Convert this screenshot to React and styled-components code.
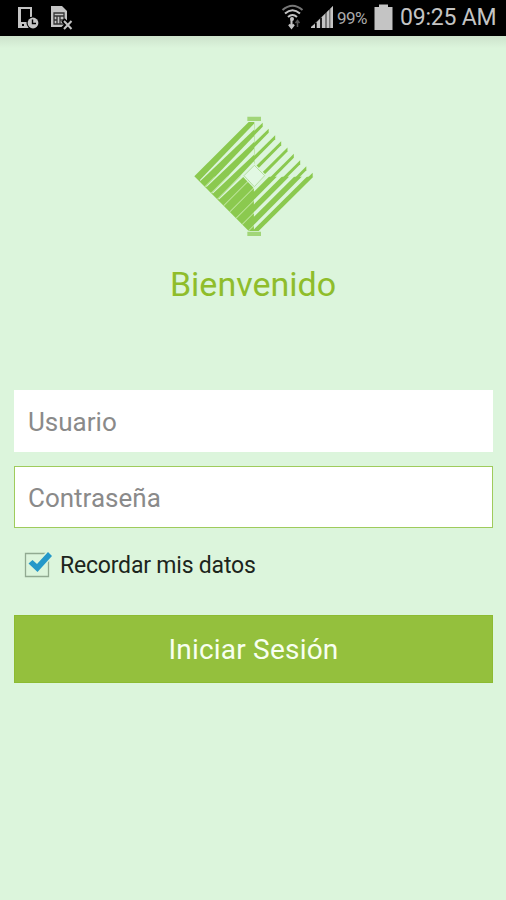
import { useState } from "react";
import styled, { createGlobalStyle } from "styled-components";

const green = "#94c03d";
const logoGreen = "#8bc94f";
const textGreen = "#8fbd2b";
const background = "#dcf5dc";
const grey = "#c4c4c4";

const GlobalStyle = createGlobalStyle`
  * {
    box-sizing: border-box;
  }
  body {
    margin: 0;
    background: ${background};
    font-family: Roboto, "Liberation Sans", sans-serif;
  }
`;

const Screen = styled.div`
  display: flex;
  flex-direction: column;
  width: 506px;
  height: 900px;
  overflow: hidden;
  background: linear-gradient(#cde3cc, ${background} 12px) 0 36px no-repeat;
`;

const StatusBar = styled.header`
  display: flex;
  justify-content: space-between;
  flex-shrink: 0;
  height: 36px;
  padding: 0 10px 0 17px;
  background: #000;
`;

const StatusGroup = styled.div`
  display: flex;
  align-items: center;
`;

const StatusIcon = styled.svg`
  display: block;
  flex-shrink: 0;
  width: ${(props) => props.$width}px;
  height: 36px;
  margin-right: ${(props) => props.$gap || 0}px;
`;

const StatusText = styled.span`
  width: ${(props) => props.$width}px;
  color: ${(props) => props.$color};
  font-size: ${(props) => props.$size}px;
  line-height: 36px;
  letter-spacing: ${(props) => props.$spacing}px;
  white-space: nowrap;
`;

const Welcome = styled.section`
  display: flex;
  flex-direction: column;
  align-items: center;
  height: 354px;
  padding-top: 70px;
`;

const LogoSvg = styled.svg`
  width: 140px;
  height: 140px;
  margin-left: 2px;
`;

const Title = styled.h1`
  margin: 18px 0 0;
  color: ${textGreen};
  font-size: 34px;
  font-weight: 400;
  line-height: 40px;
`;

const LoginForm = styled.form`
  display: flex;
  flex-direction: column;
  padding: 0 13px 0 14px;
`;

const Field = styled.input`
  height: 62px;
  margin-bottom: 14px;
  padding: 2px 13px 0;
  border: 1px solid ${(props) => (props.$active ? "#9fcb5c" : "#fff")};
  border-radius: 0;
  outline: none;
  background: #fff;
  color: #333;
  font-family: inherit;
  font-size: 26px;

  &::placeholder {
    color: #8a8a8a;
    opacity: 1;
  }
`;

const Remember = styled.label`
  display: flex;
  align-items: center;
  height: 46px;
  padding-left: 10px;
  color: #1c251c;
  font-size: 23px;
  letter-spacing: -0.2px;
`;

const HiddenCheckbox = styled.input`
  width: 0;
  height: 0;
  margin: 0;
  appearance: none;
`;

const CheckSvg = styled.svg`
  width: 30px;
  height: 30px;
  margin: -2px 6px 0 0;
`;

const SubmitButton = styled.button`
  height: 68px;
  margin-top: 27px;
  padding: 1px 0 0;
  border: 1px solid #8cbb31;
  background: ${green};
  color: #f8fff0;
  font-family: inherit;
  font-size: 28px;
  letter-spacing: 0.2px;
`;

const DeviceIcon = () => (
  <StatusIcon $width={24} $gap={9} viewBox="0 0 24 36">
    <path fillRule="evenodd" fill={grey} d="M1 7h14v10h-2V9H4v13h8v6H1z" />
    <path fill="#000" d="M5 24h2v2H5z" />
    <circle cx="16" cy="23" r="6.5" fill="#000" />
    <circle cx="16" cy="23" r="5.4" fill={grey} />
    <path d="M15.5 19.5v4H19" fill="none" stroke="#000" strokeWidth="1.4" />
  </StatusIcon>
);

const SimIcon = () => (
  <StatusIcon $width={24} viewBox="0 0 24 36">
    <path fill={grey} d="M1 6h11l5 5v16H1z" />
    <path
      d="M4 13h10v11H4zM4 16h10M7 16v8M10 16v8M4 20h3M10 20h4"
      fill="none"
      stroke="#333"
      strokeWidth="1.3"
    />
    <path d="M13 20l9 9m0-9l-9 9" stroke="#000" strokeWidth="5" />
    <path d="M14 21l7.5 8m0-8L14 29" stroke={grey} strokeWidth="2" />
  </StatusIcon>
);

const WifiIcon = () => (
  <StatusIcon $width={24} $gap={5} viewBox="0 0 24 36">
    <g fill="none" stroke={grey} strokeWidth="2.1">
      <path d="M1.5 10Q11.5 1.5 21.5 10" stroke="#777" />
      <path d="M4 13.5Q11.5 7 19 13.5" />
      <path d="M7 17Q11.5 13 16 17" />
      <path d="M10.5 20v7M8 24.5l2.500 3.200 2.500-3.200" />
      <path d="M16.500 27v-6M14.500 23l2-2.500 2 2.500" stroke="#555" strokeWidth="1.5" />
    </g>
    <circle cx="11" cy="19" r="2" fill={grey} />
  </StatusIcon>
);

const SignalIcon = () => (
  <StatusIcon $width={24} $gap={3} viewBox="0 0 24 36">
    <path fill="#777" d="M1 28v-1L23 6v22z" />
    <path
      fill={grey}
      d="M1 28v-1l4-3v4zM7 28v-6l3-3v9zM12 28V17l3-3v14zM17 28V12l2-2v18zM20.500 28V8.500L23 6v22z"
    />
    <path fill="#000" d="M5 23h1.500v5H5zM10.300 18h1.400v10h-1.400z" />
  </StatusIcon>
);

const BatteryIcon = () => (
  <StatusIcon $width={19} $gap={7} viewBox="0 0 19 36">
    <path fill={grey} d="M.5 7h4.500V4.500h9V7h4.500v23H.5z" />
  </StatusIcon>
);

const gaps = [273, 310, 348, 385, 423, 460, 498, 535, 573];
const stripes = [292, 328, 367, 403, 441, 479, 517, 554, 592];

// diagonal band along x + y = sum, w0 wide at x0 and w1 wide at x1
const band = (sum, x0, x1, w0, w1) =>
  `M${x0} ${sum - x0 - w0}L${x1} ${sum - x1 - w1}V${sum - x1 + w1}L${x0} ${sum - x0 + w0}z`;

const Logo = () => (
  <LogoSvg viewBox="0 0 420 420">
    <defs>
      <clipPath id="upperLeft">
        <path d="M0 0H210V420H202L31 211z" />
      </clipPath>
      <clipPath id="lowerLeft">
        <path d="M31 211H210V375H194z" />
      </clipPath>
      <clipPath id="lowerRight">
        <path d="M209 209H420V420H209z" />
      </clipPath>
      <clipPath id="upperRight">
        <path d="M207 40H235L400 213H207z" />
      </clipPath>
    </defs>
    <path fill={logoGreen} d="M31 211L194 48H211V375H194z" />
    <path fill={logoGreen} d="M209 212H388L224 375H209z" />
    <g fill={background} clipPath="url(#upperLeft)">
      {gaps.slice(0, 4).map((sum) => (
        <path key={sum} d={band(sum - 1, sum / 2 - 88, 211, 2, 9)} />
      ))}
    </g>
    <g fill="#bfe7a0" clipPath="url(#lowerLeft)">
      {gaps.slice(1).map((sum) => (
        <path key={sum} d={band(sum - 5, 30, 210, 2, 2)} />
      ))}
    </g>
    <g fill={background} clipPath="url(#lowerRight)">
      {gaps.map((sum) => (
        <path key={sum} d={band(sum, 209, 400, 7, 8)} />
      ))}
    </g>
    <g fill={logoGreen} clipPath="url(#upperRight)">
      {stripes.map((sum) => (
        <path key={sum} d={band(sum, 207, sum / 2 + 90, 7, 6)} />
      ))}
    </g>
    <path d="M174 209L211 172L248 209L211 248z" fill={background} />
    <path d="M180 209L211 178L242 209L211 242z" fill="#e2f8e3" stroke="#b5dfa1" strokeWidth="3" />
    <path d="M190 32H231V45H190zM190 377H231V390H190z" fill="#a1d578" />
  </LogoSvg>
);

const CheckIcon = ({ checked }) => (
  <CheckSvg viewBox="0 0 30 30">
    <path d="M1.500 4.500H24.500V27.500H1.500z" fill="none" stroke="#91aa91" strokeWidth="1.3" />
    {checked && (
      <>
        <path d="M4 15l4.500-4.500 4 4L23.500 3l4.500 4L13.500 24z" fill={background} stroke={background} strokeWidth="2" />
        <path d="M4.500 14.500L8.500 11l4.500 4L24 3l4 4L13.500 23z" fill="#2598c9" />
      </>
    )}
  </CheckSvg>
);

export default function App() {
  const [remember, setRemember] = useState(true);

  return (
    <>
      <GlobalStyle />
      <Screen>
        <StatusBar>
          <StatusGroup>
            <DeviceIcon />
            <SimIcon />
          </StatusGroup>
          <StatusGroup>
            <WifiIcon />
            <SignalIcon />
            <StatusText $width={37} $size={17} $spacing={-0.5} $color="#aaa">
              99%
            </StatusText>
            <BatteryIcon />
            <StatusText $width={96} $size={23} $spacing={-0.2} $color={grey}>
              09:25 AM
            </StatusText>
          </StatusGroup>
        </StatusBar>
        <Welcome>
          <Logo />
          <Title>Bienvenido</Title>
        </Welcome>
        <LoginForm onSubmit={(e) => e.preventDefault()}>
          <Field type="text" placeholder="Usuario" />
          <Field type="password" placeholder="Contraseña" $active />
          <Remember>
            <HiddenCheckbox
              type="checkbox"
              checked={remember}
              onChange={(e) => setRemember(e.target.checked)}
            />
            <CheckIcon checked={remember} />
            Recordar mis datos
          </Remember>
          <SubmitButton type="submit">Iniciar Sesión</SubmitButton>
        </LoginForm>
      </Screen>
    </>
  );
}
